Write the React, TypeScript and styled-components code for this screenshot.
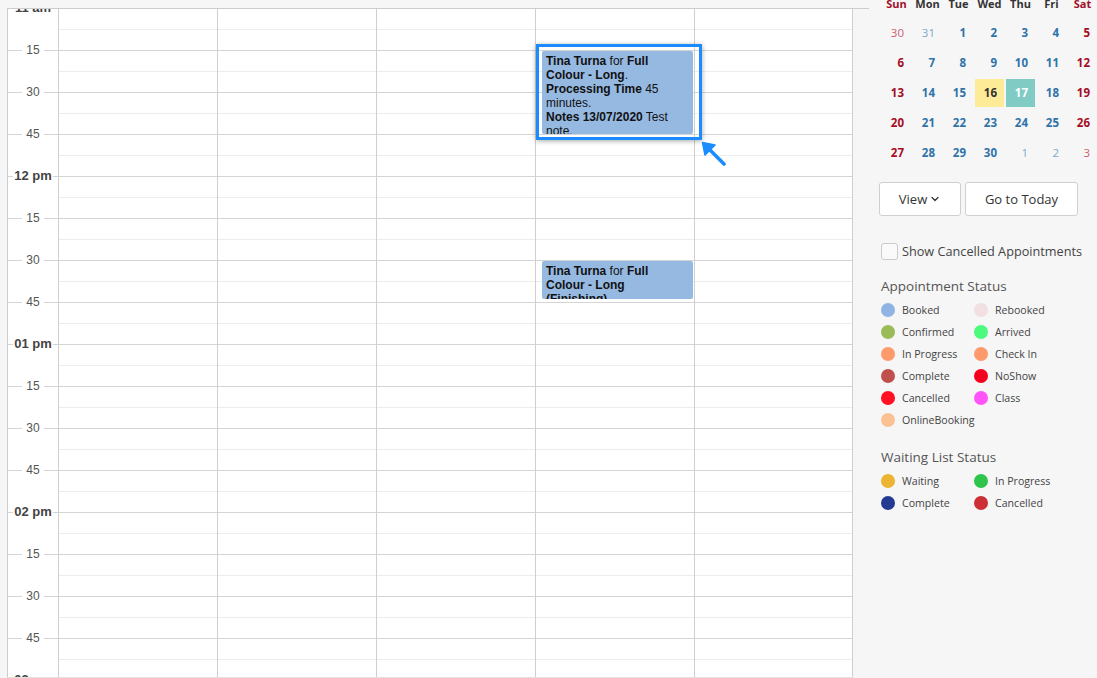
import React from 'react';
import styled, { createGlobalStyle } from 'styled-components';
import { ChevronDown } from 'lucide-react';

const GlobalStyle = createGlobalStyle`
  html, body {
    margin: 0;
    padding: 0;
    background: #f6f6f6;
    overflow: hidden;
  }
  * {
    box-sizing: border-box;
  }
`;

const Page = styled.div`
  display: flex;
  width: 1097px;
  height: 678px;
  font-family: 'Liberation Sans', Arial, sans-serif;
`;

const Main = styled.div`
  margin: 8px 0 0 7px;
  width: 862px;
  height: 670px;
  border-top: 1px solid #cdcdcd;
`;

const Scroller = styled.div`
  display: flex;
  width: 846px;
  height: 669px;
  overflow: hidden;
  background: #fff;
  border-left: 1px solid #cdcdcd;
  border-bottom: 1px solid #e2e2e2;
`;

const Gutter = styled.div`
  width: 50px;
  flex-shrink: 0;
  display: flex;
  flex-direction: column;
`;

const GutterCell = styled.div`
  position: relative;
  height: 42px;
  flex-shrink: 0;
`;

const TimeLabel = styled.div<{ $hour?: boolean }>`
  position: absolute;
  left: 0;
  right: 0;
  top: -1px;
  transform: translateY(-50%);
  display: flex;
  align-items: center;
  gap: ${(p) => (p.$hour ? '1px' : '4px')};
  color: ${(p) => (p.$hour ? '#444' : '#555')};
  font-size: ${(p) => (p.$hour ? '13px' : '12px')};
  font-weight: ${(p) => (p.$hour ? 700 : 400)};
  line-height: 16px;
  white-space: nowrap;

  &::before,
  &::after {
    content: '';
    flex: 1;
    height: 1px;
    background: #d4d4d4;
  }
`;

const DayColumn = styled.div<{ $last?: boolean }>`
  position: relative;
  width: 159px;
  flex-shrink: 0;
  border-left: 1px solid #cfcfcf;
  border-right: ${(p) => (p.$last ? '1px solid #cfcfcf' : 'none')};
`;

const Slot = styled.div`
  height: 42px;
  border-bottom: 1px solid #d4d4d4;
`;

const HalfSlot = styled.div`
  height: 21px;
  border-bottom: 1px solid #ececec;
`;

const Event = styled.div<{ $top: number; $height: number }>`
  position: absolute;
  left: 6px;
  width: 151px;
  top: ${(p) => p.$top}px;
  height: ${(p) => p.$height}px;
  padding: 3px 4px;
  background: #96b9e2;
  border-radius: 2px;
  color: #111;
  font-size: 12px;
  line-height: 14px;
  overflow: hidden;

  b {
    font-weight: 700;
  }
`;

const Selection = styled.div`
  position: absolute;
  z-index: 2;
  left: 0;
  top: 35px;
  width: 166px;
  height: 96px;
  border: 3px solid #1a8cff;
  box-shadow: 0 1px 5px rgba(0, 0, 0, 0.35);
`;

const Cursor = styled.svg`
  position: absolute;
  z-index: 3;
  left: 164px;
  top: 131px;
`;

const Sidebar = styled.aside`
  width: 228px;
  padding-left: 12px;
  font-family: 'Open Sans', 'Liberation Sans', sans-serif;
  color: #444;
`;

const CalGrid = styled.div`
  display: grid;
  grid-template-columns: repeat(7, 29px);
  column-gap: 2px;
  row-gap: 2px;
  margin-left: 1px;
`;

const WeekHeader = styled(CalGrid)`
  margin-top: -5px;
  margin-bottom: 6px;
`;

const DayName = styled.div<{ $weekend?: boolean }>`
  height: 18px;
  line-height: 18px;
  text-align: center;
  font-size: 11px;
  font-weight: 700;
  color: ${(p) => (p.$weekend ? '#a0102a' : '#333')};
`;

type DayKind = 'week' | 'weekend' | 'otherWeek' | 'otherWeekend';

const dayColors: Record<DayKind, string> = {
  week: '#2f73a8',
  weekend: '#a50c26',
  otherWeek: '#7fa8c8',
  otherWeekend: '#c66272',
};

const DayCell = styled.div<{ $kind: DayKind; $bg?: string; $fg?: string }>`
  height: 28px;
  line-height: 28px;
  padding-right: 7px;
  text-align: right;
  font-size: 11.5px;
  font-weight: ${(p) => (p.$kind.startsWith('other') ? 400 : 700)};
  color: ${(p) => p.$fg || dayColors[p.$kind]};
  background: ${(p) => p.$bg || 'transparent'};
`;

const ButtonRow = styled.div`
  display: flex;
  gap: 4px;
  margin-top: 15px;
  margin-left: -2px;
`;

const Button = styled.button<{ $width: number }>`
  width: ${(p) => p.$width}px;
  height: 34px;
  display: flex;
  align-items: center;
  justify-content: center;
  gap: 2px;
  background: #fff;
  border: 1px solid #cfcfcf;
  border-radius: 3px;
  color: #333;
  font-family: 'Open Sans', 'Liberation Sans', sans-serif;
  font-size: 13px;
  padding: 0;
`;

const CheckRow = styled.label`
  display: flex;
  align-items: center;
  gap: 4px;
  margin-top: 26px;
  font-size: 12.7px;
  color: #444;
  white-space: nowrap;
`;

const CheckBox = styled.span`
  width: 17px;
  height: 17px;
  border: 1px solid #cbcbcb;
  border-radius: 3px;
  background: #fafafa;
`;

const SectionTitle = styled.div<{ $gap: number }>`
  margin-top: ${(p) => p.$gap}px;
  font-size: 13.5px;
  color: #555;
  line-height: 18px;
`;

const Legend = styled.div`
  display: grid;
  grid-template-columns: 93px 93px;
  grid-auto-rows: 22px;
  margin-top: 4px;
`;

const LegendItem = styled.div`
  display: flex;
  align-items: center;
  gap: 7px;
  font-size: 10.6px;
  color: #444;
`;

const Dot = styled.span<{ $color: string }>`
  width: 14px;
  height: 14px;
  border-radius: 50%;
  background: ${(p) => p.$color};
  flex-shrink: 0;
`;

const labels = [
  '11 am', '15', '30', '45',
  '12 pm', '15', '30', '45',
  '01 pm', '15', '30', '45',
  '02 pm', '15', '30', '45',
  '03 pm',
];

const weeks: [number, DayKind][][] = [
  [[30, 'otherWeekend'], [31, 'otherWeek'], [1, 'week'], [2, 'week'], [3, 'week'], [4, 'week'], [5, 'weekend']],
  [[6, 'weekend'], [7, 'week'], [8, 'week'], [9, 'week'], [10, 'week'], [11, 'week'], [12, 'weekend']],
  [[13, 'weekend'], [14, 'week'], [15, 'week'], [16, 'week'], [17, 'week'], [18, 'week'], [19, 'weekend']],
  [[20, 'weekend'], [21, 'week'], [22, 'week'], [23, 'week'], [24, 'week'], [25, 'week'], [26, 'weekend']],
  [[27, 'weekend'], [28, 'week'], [29, 'week'], [30, 'week'], [1, 'otherWeek'], [2, 'otherWeek'], [3, 'otherWeekend']],
];

const appointmentStatus = [
  ['Booked', '#8fb4e3'],
  ['Rebooked', '#f1dfe2'],
  ['Confirmed', '#9bbb59'],
  ['Arrived', '#4cfa7c'],
  ['In Progress', '#fd9a6c'],
  ['Check In', '#fd9a6c'],
  ['Complete', '#c0504d'],
  ['NoShow', '#f5001e'],
  ['Cancelled', '#ff1022'],
  ['Class', '#ff55f8'],
  ['OnlineBooking', '#fbc193'],
];

const waitingStatus = [
  ['Waiting', '#ebb533'],
  ['In Progress', '#2fc44b'],
  ['Complete', '#253b91'],
  ['Cancelled', '#cc3035'],
];

const Slots = () => (
  <>
    {Array.from({ length: 16 }).map((_, i) => (
      <Slot key={i}>
        <HalfSlot />
      </Slot>
    ))}
  </>
);

const MiniCalendar = () => (
  <>
    <WeekHeader>
      {['Sun', 'Mon', 'Tue', 'Wed', 'Thu', 'Fri', 'Sat'].map((d, i) => (
        <DayName key={d} $weekend={i === 0 || i === 6}>
          {d}
        </DayName>
      ))}
    </WeekHeader>
    <CalGrid>
      {weeks.flat().map(([n, kind], i) => {
        const today = kind === 'week' && n === 16;
        const selected = kind === 'week' && n === 17;
        return (
          <DayCell
            key={i}
            $kind={kind}
            $bg={today ? '#fdeb98' : selected ? '#80ccc5' : undefined}
            $fg={today ? '#333' : selected ? '#fff' : undefined}
          >
            {n}
          </DayCell>
        );
      })}
    </CalGrid>
  </>
);

export default function App() {
  return (
    <Page>
      <GlobalStyle />
      <Main>
        <Scroller>
          <Gutter>
            {labels.map((l, i) => (
              <GutterCell key={i}>
                <TimeLabel $hour={l.includes('m')}>{l}</TimeLabel>
              </GutterCell>
            ))}
          </Gutter>
          <DayColumn>
            <Slots />
          </DayColumn>
          <DayColumn>
            <Slots />
          </DayColumn>
          <DayColumn>
            <Slots />
          </DayColumn>
          <DayColumn>
            <Slots />
            <Event $top={42} $height={83}>
              <b>Tina Turna</b> for <b>Full Colour - Long</b>.<br />
              <b>Processing Time</b> 45 minutes.<br />
              <b>Notes 13/07/2020</b> Test note.
            </Event>
            <Selection />
            <Cursor width="26" height="26" viewBox="0 0 26 26">
              <path d="M24 24 L7 7" stroke="#1a8cff" strokeWidth="3.6" strokeLinecap="round" />
              <path d="M2.5 2.5 L15 5 L5 15 Z" fill="#1a8cff" stroke="#1a8cff" strokeWidth="1.5" strokeLinejoin="round" />
            </Cursor>
            <Event $top={252} $height={38}>
              <b>Tina Turna</b> for <b>Full Colour - Long (Finishing)</b>
            </Event>
          </DayColumn>
          <DayColumn $last>
            <Slots />
          </DayColumn>
        </Scroller>
      </Main>
      <Sidebar>
        <MiniCalendar />
        <ButtonRow>
          <Button $width={82}>
            View <ChevronDown size={12} strokeWidth={2.5} />
          </Button>
          <Button $width={113}>Go to Today</Button>
        </ButtonRow>
        <CheckRow>
          <CheckBox />
          Show Cancelled Appointments
        </CheckRow>
        <SectionTitle $gap={17}>Appointment Status</SectionTitle>
        <Legend>
          {appointmentStatus.map(([name, color]) => (
            <LegendItem key={name}>
              <Dot $color={color} />
              {name}
            </LegendItem>
          ))}
        </Legend>
        <SectionTitle $gap={17}>Waiting List Status</SectionTitle>
        <Legend>
          {waitingStatus.map(([name, color]) => (
            <LegendItem key={name}>
              <Dot $color={color} />
              {name}
            </LegendItem>
          ))}
        </Legend>
      </Sidebar>
    </Page>
  );
}
